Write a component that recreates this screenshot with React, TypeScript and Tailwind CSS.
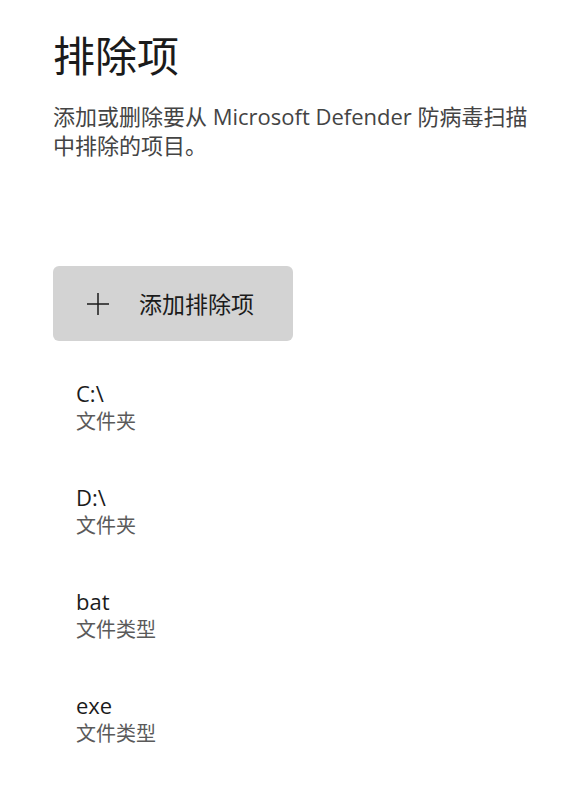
import React from "react";

const font = { fontFamily: '"Open Sans", "Noto Sans CJK SC", sans-serif' };

const items = [
  { name: "C:\\", type: "文件夹" },
  { name: "D:\\", type: "文件夹" },
  { name: "bat", type: "文件类型" },
  { name: "exe", type: "文件类型" },
];

export default function App() {
  return (
    <div
      className="w-[581px] h-[804px] bg-white pl-[53px] pt-[28px] overflow-hidden"
      style={font}
    >
      <h1 className="text-[42px] leading-[56px] text-[#1b1b1b] font-normal">排除项</h1>
      <p className="mt-[18px] w-[482px] text-[22px] leading-[29px] text-[#444444]">
        添加或删除要从 Microsoft Defender 防病毒扫描中排除的项目。
      </p>
      <button className="mt-[106px] w-[240px] h-[75px] rounded-[6px] bg-[#d3d3d3] flex items-center">
        <svg width="24" height="24" viewBox="0 0 24 24" className="ml-[33px]">
          <path d="M12 1v22M1 12h22" stroke="#1b1b1b" strokeWidth="1.5" fill="none" />
        </svg>
        <span className="ml-[29px] text-[23px] leading-[30px] text-[#1b1b1b]">添加排除项</span>
      </button>
      <div className="mt-[38px] pl-[23px] flex flex-col gap-[47px]">
        {items.map((it) => (
          <div key={it.name} className="flex flex-col">
            <span className="text-[22px] leading-[29px] text-[#1b1b1b]">{it.name}</span>
            <span className="text-[20px] leading-[28px] text-[#5a5a5a]">{it.type}</span>
          </div>
        ))}
      </div>
    </div>
  );
}
